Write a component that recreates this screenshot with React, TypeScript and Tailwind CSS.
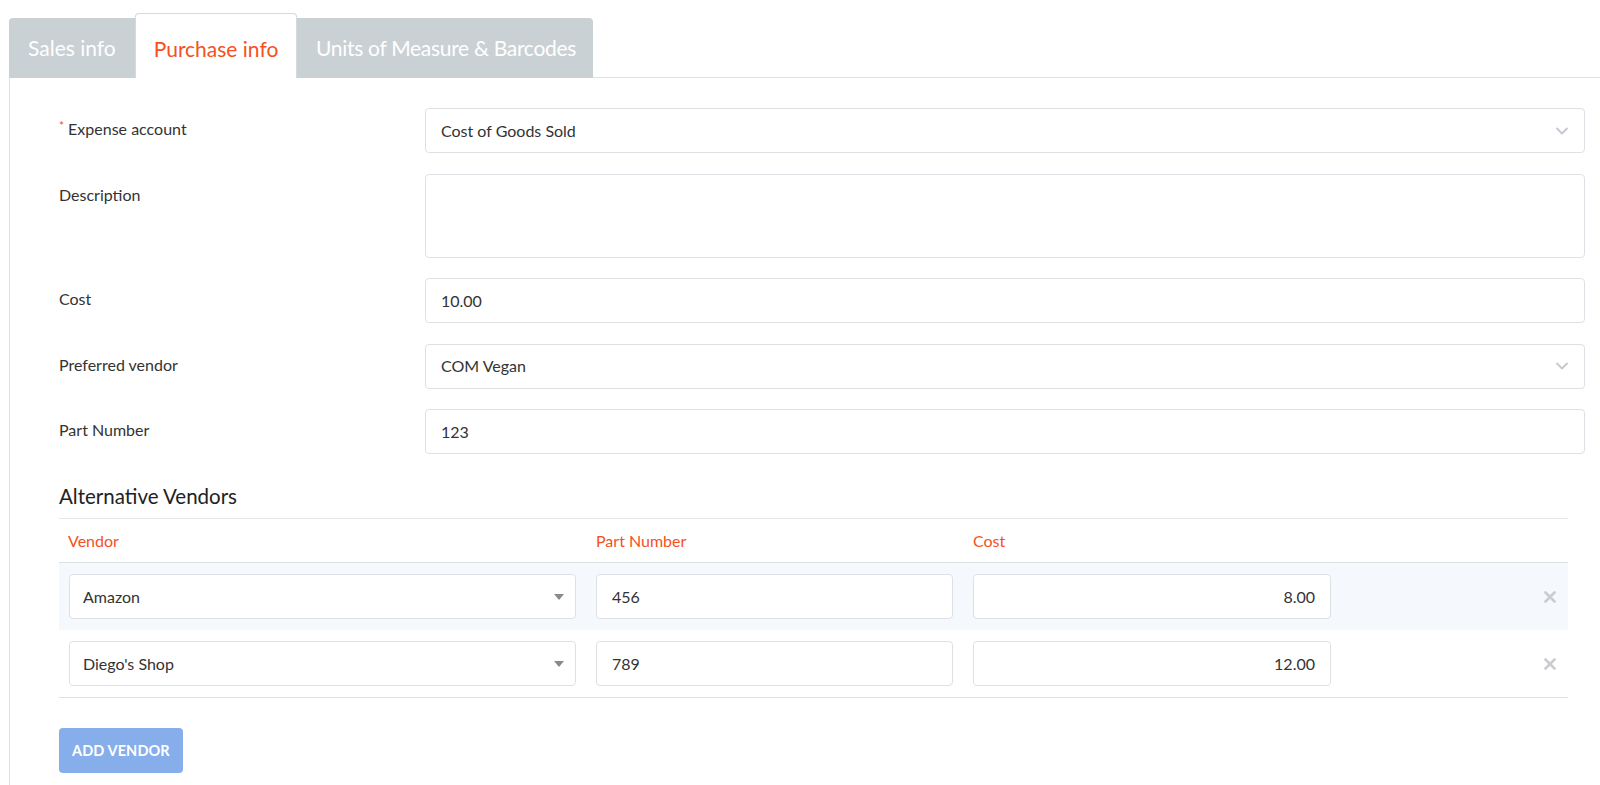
import { ChevronDown } from 'lucide-react';

const font = { fontFamily: 'Lato, "Liberation Sans", sans-serif' };

function Field({ label, required, children }: { label: string; required?: boolean; children: React.ReactNode }) {
  return (
    <div className="flex">
      <div className="w-[366px] shrink-0 pt-[9px] text-[16px] text-[#333]">
        {required && <span className="text-[#f4511e] mr-1 text-[12px] align-top">*</span>}
        {label}
      </div>
      <div className="flex-1 min-w-0">{children}</div>
    </div>
  );
}

function TextBox({ value, select }: { value: string; select?: boolean }) {
  return (
    <div className="h-[45px] border border-[#dde1e6] rounded-[4px] bg-white flex items-center pl-[15px] pr-[12px] text-[16px] text-[#333]">
      <span className="flex-1">{value}</span>
      {select && <ChevronDown className="w-[20px] h-[20px] text-[#c3c9cf]" strokeWidth={2.2} />}
    </div>
  );
}

function Caret() {
  return (
    <svg width="10" height="6" viewBox="0 0 10 6">
      <path d="M0 0 L10 0 L5 6 Z" fill="#8a8a8a" />
    </svg>
  );
}

function RemoveX() {
  return (
    <svg width="12" height="12" viewBox="0 0 12 12">
      <path d="M1.5 1.5 L10.5 10.5 M10.5 1.5 L1.5 10.5" stroke="#c9cdd2" strokeWidth="2.6" strokeLinecap="round" />
    </svg>
  );
}

function VendorRow({ vendor, part, cost, shaded }: { vendor: string; part: string; cost: string; shaded?: boolean }) {
  return (
    <div className={`flex items-center h-[67px] ${shaded ? 'bg-[#f5f8fc]' : 'bg-white'}`}>
      <div className="w-[527px] shrink-0 px-[10px]">
        <div className="h-[45px] border border-[#dde1e6] rounded-[4px] bg-white flex items-center pl-[13px] pr-[11px] text-[16px] text-[#333]">
          <span className="flex-1">{vendor}</span>
          <Caret />
        </div>
      </div>
      <div className="w-[377px] shrink-0 px-[10px]">
        <div className="h-[45px] border border-[#dde1e6] rounded-[4px] bg-white flex items-center px-[15px] text-[16px] text-[#333]">
          {part}
        </div>
      </div>
      <div className="w-[378px] shrink-0 px-[10px]">
        <div className="h-[45px] border border-[#dde1e6] rounded-[4px] bg-white flex items-center justify-end px-[15px] text-[16px] text-[#333]">
          {cost}
        </div>
      </div>
      <div className="flex-1 flex justify-end pr-[12px]">
        <RemoveX />
      </div>
    </div>
  );
}

export default function App() {
  return (
    <div className="w-full h-screen bg-white overflow-hidden flex flex-col" style={font}>
      <div className="flex items-end pl-[9px] pt-[13px] shrink-0">
        <div className="h-[60px] w-[126px] bg-[#c9d1d5] rounded-tl-[4px] flex items-center pl-[19px] text-[21px] text-white">
          Sales info
        </div>
        <div className="h-[65px] w-[162px] bg-white border border-b-0 border-[#d5dade] rounded-t-[4px] flex items-center justify-center pt-[5px] text-[21px] text-[#f4511e]">
          Purchase info
        </div>
        <div className="h-[60px] w-[296px] bg-[#c9d1d5] rounded-tr-[4px] flex items-center pl-[19px] text-[21px] tracking-[-0.3px] text-white">
          Units of Measure &amp; Barcodes
        </div>
        <div className="flex-1 border-b border-[#dde1e6]" />
      </div>

      <div className="flex-1 ml-[9px] border-l border-[#dde1e6] pl-[49px] pr-[15px] pt-[30px]">
        <div className="flex flex-col gap-[20.5px]">
          <Field label="Expense account" required>
            <TextBox value="Cost of Goods Sold" select />
          </Field>
          <Field label="Description">
            <div className="h-[84px] border border-[#dde1e6] rounded-[4px] bg-white" />
          </Field>
          <Field label="Cost">
            <TextBox value="10.00" />
          </Field>
          <Field label="Preferred vendor">
            <TextBox value="COM Vegan" select />
          </Field>
          <Field label="Part Number">
            <TextBox value="123" />
          </Field>
        </div>

        <div className="mr-[17px] mt-[29px]">
          <div className="text-[20.5px] text-[#222] pb-[8px] border-b border-[#e3e6ea] leading-[27px]">
            Alternative Vendors
          </div>
          <div className="flex h-[44px] items-center border-b border-[#dde1e6] text-[16px] text-[#f4511e]">
            <div className="w-[527px] pl-[9px]">Vendor</div>
            <div className="w-[377px] pl-[10px]">Part Number</div>
            <div className="w-[378px] pl-[10px]">Cost</div>
          </div>
          <VendorRow vendor="Amazon" part="456" cost="8.00" shaded />
          <VendorRow vendor="Diego's Shop" part="789" cost="12.00" />
          <div className="border-t border-[#dde1e6]" />
          <button className="mt-[30px] h-[45px] px-[13px] rounded-[4px] bg-[#86aeea] text-white text-[14.5px] font-bold tracking-[0.1px]">
            ADD VENDOR
          </button>
        </div>
      </div>
    </div>
  );
}
